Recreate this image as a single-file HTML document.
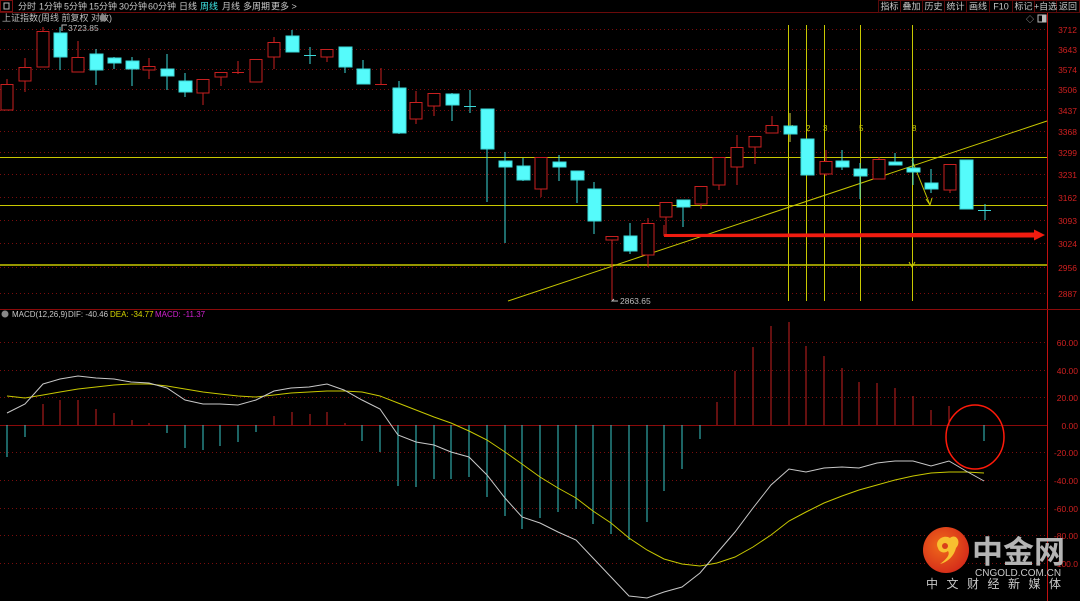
<!DOCTYPE html>
<html><head><meta charset="utf-8"><style>
html,body{margin:0;padding:0;background:#000;width:1080px;height:601px;overflow:hidden}
svg{display:block}
text{font-family:"Liberation Sans","Noto Sans CJK SC",sans-serif}
</style></head><body>
<svg width="1080" height="601" viewBox="0 0 1080 601" xmlns="http://www.w3.org/2000/svg">
<rect width="1080" height="601" fill="#000"/>
<!-- top bar -->
<line x1="0" y1="12.5" x2="1080" y2="12.5" stroke="#6a0a0a"/>
<rect x="0.5" y="0.5" width="12" height="11" fill="none" stroke="#7a1010"/>
<rect x="4" y="3" width="5" height="6" fill="none" stroke="#bbb" stroke-width="1"/>
<g font-size="9" fill="#c8c8c8">
<text x="18" y="9.5">分时</text><text x="39" y="9.5">1分钟</text><text x="64" y="9.5">5分钟</text>
<text x="89" y="9.5">15分钟</text><text x="119" y="9.5">30分钟</text><text x="148" y="9.5">60分钟</text>
<text x="179" y="9.5">日线</text><text x="200" y="9.5" fill="#3fe8e8">周线</text><text x="222" y="9.5">月线</text>
<text x="243" y="9.5">多周期</text><text x="271" y="9.5">更多 &gt;</text>
</g>
<g stroke="#5a0a0a" fill="none">
<rect x="878.5" y="0.5" width="22" height="12"/><rect x="900.5" y="0.5" width="22" height="12"/>
<rect x="922.5" y="0.5" width="22" height="12"/><rect x="944.5" y="0.5" width="22" height="12"/>
<rect x="966.5" y="0.5" width="23" height="12"/><rect x="989.5" y="0.5" width="23" height="12"/>
<rect x="1012.5" y="0.5" width="22" height="12"/><rect x="1034.5" y="0.5" width="22" height="12"/>
<rect x="1056.5" y="0.5" width="23" height="12"/>
</g>
<g font-size="9" fill="#c8c8c8" text-anchor="middle">
<text x="889.5" y="9.5">指标</text><text x="911.5" y="9.5">叠加</text><text x="933.5" y="9.5">历史</text>
<text x="955.5" y="9.5">统计</text><text x="978" y="9.5">画线</text><text x="1001" y="9.5">F10</text>
<text x="1023.5" y="9.5">标记</text><text x="1045.5" y="9.5">+自选</text><text x="1068" y="9.5">返回</text>
</g>
<text x="2" y="21" font-size="9" fill="#bdbdbd">上证指数(周线 前复权 对数)</text>
<circle cx="103" cy="18" r="3.5" fill="#888"/>
<text x="1026" y="22" font-size="8" fill="#bbb">◇</text>
<rect x="1038" y="15" width="8" height="7" fill="none" stroke="#bbb"/><rect x="1042" y="15" width="4" height="7" fill="#bbb"/>

<!-- axis -->
<line x1="1047.5" y1="13" x2="1047.5" y2="601" stroke="#c01010"/>
<line x1="0" y1="309.5" x2="1080" y2="309.5" stroke="#8a0a0a"/>
<g stroke="#7a0d0d" stroke-dasharray="1,3">
<line x1="0" y1="29.5" x2="1047" y2="29.5"/><line x1="0" y1="49.5" x2="1047" y2="49.5"/>
<line x1="0" y1="69.5" x2="1047" y2="69.5"/><line x1="0" y1="89.5" x2="1047" y2="89.5"/>
<line x1="0" y1="110.5" x2="1047" y2="110.5"/><line x1="0" y1="131.5" x2="1047" y2="131.5"/>
<line x1="0" y1="152.5" x2="1047" y2="152.5"/><line x1="0" y1="174.5" x2="1047" y2="174.5"/>
<line x1="0" y1="197.5" x2="1047" y2="197.5"/><line x1="0" y1="220.5" x2="1047" y2="220.5"/>
<line x1="0" y1="243.5" x2="1047" y2="243.5"/><line x1="0" y1="267.5" x2="1047" y2="267.5"/>
<line x1="0" y1="293.5" x2="1047" y2="293.5"/>
<line x1="0" y1="342.5" x2="1047" y2="342.5"/><line x1="0" y1="370.5" x2="1047" y2="370.5"/>
<line x1="0" y1="397.5" x2="1047" y2="397.5"/><line x1="0" y1="452.5" x2="1047" y2="452.5"/>
<line x1="0" y1="480.5" x2="1047" y2="480.5"/><line x1="0" y1="508.5" x2="1047" y2="508.5"/>
<line x1="0" y1="535.5" x2="1047" y2="535.5"/><line x1="0" y1="563.5" x2="1047" y2="563.5"/>
</g>
<line x1="0" y1="425.5" x2="1047" y2="425.5" stroke="#8a0a0a"/>
<g font-size="8.5" fill="#d02020" text-anchor="end">
<text x="1077" y="33">3712</text><text x="1077" y="53">3643</text><text x="1077" y="73">3574</text>
<text x="1077" y="93">3506</text><text x="1077" y="114">3437</text><text x="1077" y="135">3368</text>
<text x="1077" y="156">3299</text><text x="1077" y="178">3231</text><text x="1077" y="201">3162</text>
<text x="1077" y="224">3093</text><text x="1077" y="247">3024</text><text x="1077" y="271">2956</text>
<text x="1077" y="297">2887</text>
<text x="1078" y="346">60.00</text><text x="1078" y="374">40.00</text><text x="1078" y="401">20.00</text>
<text x="1078" y="429">0.00</text><text x="1078" y="456">-20.00</text><text x="1078" y="484">-40.00</text>
<text x="1078" y="512">-60.00</text><text x="1078" y="539">-80.00</text><text x="1078" y="567">-100.0</text>
</g>

<!-- yellow lines -->
<g stroke="#c8c800" stroke-width="1">
<line x1="0" y1="157.5" x2="1047" y2="157.5"/><line x1="0" y1="205.5" x2="1047" y2="205.5"/>
<line x1="0" y1="265" x2="1047" y2="265" stroke-width="1.5"/>
<line x1="788.5" y1="25" x2="788.5" y2="301"/><line x1="806.5" y1="25" x2="806.5" y2="301"/>
<line x1="824.5" y1="25" x2="824.5" y2="301"/><line x1="860.5" y1="25" x2="860.5" y2="301"/>
<line x1="912.5" y1="25" x2="912.5" y2="301"/>
<line x1="508" y1="301" x2="1047" y2="121"/>
<polyline points="912,160 930,205" fill="none"/>
<polyline points="926,199 930,205 932,198" fill="none"/>
<polyline points="909,262 912,267 915,262" fill="none"/>
</g>
<g font-size="8" fill="#c8c800"><text x="790" y="131">1</text><text x="806" y="131">2</text><text x="823" y="131">3</text><text x="859" y="131">5</text><text x="912" y="131">8</text></g>

<!-- candles -->
<g stroke-width="1">
<g stroke="#c82020" fill="#000">
<line x1="7" y1="79" x2="7" y2="110"/><rect x="1" y="84.5" width="12" height="25.5"/>
<line x1="25" y1="58" x2="25" y2="92"/><rect x="19" y="67.5" width="12" height="13.5"/>
<line x1="43" y1="27" x2="43" y2="67"/><rect x="37" y="31.5" width="12" height="35.5"/>
<line x1="78" y1="41" x2="78" y2="72"/><rect x="72" y="57.5" width="12" height="14.5"/>
<line x1="149" y1="58" x2="149" y2="79"/><rect x="143" y="66.5" width="12" height="3.5"/>
<line x1="203" y1="79" x2="203" y2="105"/><rect x="197" y="79.5" width="12" height="13.5"/>
<line x1="221" y1="72" x2="221" y2="86"/><rect x="215" y="72.5" width="12" height="4.5"/>
<line x1="238" y1="61" x2="238" y2="74"/><line x1="232" y1="72.5" x2="244" y2="72.5"/>
<rect x="250" y="59.5" width="12" height="22.5"/>
<line x1="274" y1="37" x2="274" y2="69"/><rect x="268" y="42.5" width="12" height="14.5"/>
<line x1="327" y1="49" x2="327" y2="62"/><rect x="321" y="49.5" width="12" height="7.5"/>
<line x1="381" y1="68" x2="381" y2="85"/><line x1="375" y1="84.5" x2="387" y2="84.5"/>
<line x1="416" y1="91" x2="416" y2="124"/><rect x="410" y="102.5" width="12" height="16.5"/>
<line x1="434" y1="93" x2="434" y2="116"/><rect x="428" y="93.5" width="12" height="12.5"/>
<line x1="541" y1="157" x2="541" y2="197"/><rect x="535" y="157.5" width="12" height="31.5"/>
<line x1="612" y1="236" x2="612" y2="300"/><rect x="606" y="236.5" width="12" height="3.5"/>
<line x1="648" y1="218" x2="648" y2="267"/><rect x="642" y="223.5" width="12" height="31.5"/>
<line x1="666" y1="202" x2="666" y2="237"/><rect x="660" y="202.5" width="12" height="14.5"/>
<line x1="701" y1="186" x2="701" y2="209"/><rect x="695" y="186.5" width="12" height="17.5"/>
<line x1="719" y1="157" x2="719" y2="190"/><rect x="713" y="157.5" width="12" height="27.5"/>
<line x1="737" y1="135" x2="737" y2="185"/><rect x="731" y="147.5" width="12" height="19.5"/>
<line x1="755" y1="136" x2="755" y2="164"/><rect x="749" y="136.5" width="12" height="10.5"/>
<line x1="772" y1="116" x2="772" y2="133"/><rect x="766" y="125.5" width="12" height="7.5"/>
<line x1="826" y1="150" x2="826" y2="176"/><rect x="820" y="161.5" width="12" height="12.5"/>
<line x1="879" y1="157" x2="879" y2="179"/><rect x="873" y="159.5" width="12" height="19.5"/>
<line x1="950" y1="164" x2="950" y2="193"/><rect x="944" y="164.5" width="12" height="25.5"/>
</g>
<g stroke="#3cd8d8" fill="#55fbfb">
<line x1="60" y1="27" x2="60" y2="70"/><rect x="54" y="33" width="13" height="24"/>
<line x1="96" y1="49" x2="96" y2="85"/><rect x="90" y="54" width="13" height="16"/>
<line x1="114" y1="57" x2="114" y2="69"/><rect x="108" y="58" width="13" height="5"/>
<line x1="132" y1="57" x2="132" y2="86"/><rect x="126" y="61" width="13" height="8"/>
<line x1="167" y1="54" x2="167" y2="90"/><rect x="161" y="69" width="13" height="7"/>
<line x1="185" y1="73" x2="185" y2="97"/><rect x="179" y="81" width="13" height="11"/>
<line x1="292" y1="30" x2="292" y2="52"/><rect x="286" y="36" width="13" height="16"/>
<line x1="310" y1="47" x2="310" y2="64"/><line x1="304" y1="55.5" x2="316" y2="55.5"/>
<line x1="345" y1="47" x2="345" y2="73"/><rect x="339" y="47" width="13" height="20"/>
<line x1="363" y1="60" x2="363" y2="84"/><rect x="357" y="69" width="13" height="15"/>
<line x1="399" y1="81" x2="399" y2="134"/><rect x="393" y="88" width="13" height="45"/>
<line x1="452" y1="93" x2="452" y2="121"/><rect x="446" y="94" width="13" height="11"/>
<line x1="470" y1="90" x2="470" y2="113"/><line x1="464" y1="106.5" x2="476" y2="106.5"/>
<line x1="487" y1="109" x2="487" y2="202"/><rect x="481" y="109" width="13" height="40"/>
<line x1="505" y1="152" x2="505" y2="243"/><rect x="499" y="161" width="13" height="6"/>
<line x1="523" y1="158" x2="523" y2="181"/><rect x="517" y="166" width="13" height="14"/>
<line x1="559" y1="155" x2="559" y2="181"/><rect x="553" y="162" width="13" height="5"/>
<line x1="577" y1="171" x2="577" y2="203"/><rect x="571" y="171" width="13" height="9"/>
<line x1="594" y1="182" x2="594" y2="234"/><rect x="588" y="189" width="13" height="32"/>
<line x1="630" y1="223" x2="630" y2="254"/><rect x="624" y="236" width="13" height="15"/>
<line x1="683" y1="200" x2="683" y2="227"/><rect x="677" y="200" width="13" height="7"/>
<line x1="790" y1="113" x2="790" y2="142" stroke="#cccc40"/><rect x="784" y="126" width="13" height="8"/>
<line x1="808" y1="139" x2="808" y2="175"/><rect x="801" y="139" width="13" height="36"/>
<line x1="842" y1="150" x2="842" y2="170"/><rect x="836" y="161" width="13" height="6"/>
<line x1="860" y1="163" x2="860" y2="199"/><rect x="854" y="169" width="13" height="7"/>
<line x1="895" y1="153" x2="895" y2="165"/><rect x="889" y="162" width="13" height="3"/>
<line x1="913" y1="158" x2="913" y2="185"/><rect x="907" y="168" width="13" height="4"/>
<line x1="931" y1="169" x2="931" y2="193"/><rect x="925" y="183" width="13" height="6"/>
<line x1="966" y1="160" x2="966" y2="209"/><rect x="960" y="160" width="13" height="49"/>
<line x1="985" y1="204" x2="985" y2="220"/><line x1="978" y1="210.5" x2="991" y2="210.5"/>
</g>
</g>
<!-- red arrow -->
<polygon points="664,234 1034,232.5 1034,229.5 1045,235 1034,240.5 1034,237.5 664,237" fill="#f01c10"/>
<line x1="664" y1="225" x2="664" y2="236" stroke="#c82020"/>
<g font-size="8.5" fill="#bbb"><text x="68" y="31">3723.85</text><text x="620" y="304">2863.65</text></g>
<polyline points="62,31 62,25 67,25" fill="none" stroke="#bbb"/>
<polyline points="618,301 612,301 614,299" fill="none" stroke="#bbb"/>

<!-- MACD -->
<circle cx="5" cy="314" r="3.5" fill="#888"/>
<g font-size="8"><text x="12" y="317" fill="#c8c8c8">MACD(12,26,9)</text><text x="68" y="317" fill="#c8c8c8">DIF: -40.46</text>
<text x="110" y="317" fill="#d8d800">DEA: -34.77</text><text x="155" y="317" fill="#d020d0">MACD: -11.37</text></g>
<g stroke="#c82020">
<line x1="43" y1="425" x2="43" y2="404"/><line x1="60" y1="425" x2="60" y2="400"/><line x1="78" y1="425" x2="78" y2="400"/>
<line x1="96" y1="425" x2="96" y2="409"/><line x1="114" y1="425" x2="114" y2="413"/><line x1="132" y1="425" x2="132" y2="420"/>
<line x1="149" y1="425" x2="149" y2="423"/><line x1="274" y1="425" x2="274" y2="416"/><line x1="292" y1="425" x2="292" y2="412"/>
<line x1="310" y1="425" x2="310" y2="414"/><line x1="327" y1="425" x2="327" y2="412"/><line x1="345" y1="425" x2="345" y2="423"/>
<line x1="717" y1="425" x2="717" y2="402"/><line x1="735" y1="425" x2="735" y2="371"/><line x1="753" y1="425" x2="753" y2="347"/>
<line x1="771" y1="425" x2="771" y2="326"/><line x1="789" y1="425" x2="789" y2="322"/><line x1="806" y1="425" x2="806" y2="346"/>
<line x1="824" y1="425" x2="824" y2="356"/><line x1="842" y1="425" x2="842" y2="368"/><line x1="859" y1="425" x2="859" y2="382"/>
<line x1="877" y1="425" x2="877" y2="383"/><line x1="895" y1="425" x2="895" y2="388"/><line x1="913" y1="425" x2="913" y2="396"/>
<line x1="931" y1="425" x2="931" y2="410"/><line x1="949" y1="425" x2="949" y2="406"/>
</g>
<g stroke="#38c8c8">
<line x1="7" y1="425" x2="7" y2="457"/><line x1="25" y1="425" x2="25" y2="437"/><line x1="167" y1="425" x2="167" y2="433"/>
<line x1="185" y1="425" x2="185" y2="448"/><line x1="203" y1="425" x2="203" y2="450"/><line x1="220" y1="425" x2="220" y2="446"/>
<line x1="238" y1="425" x2="238" y2="442"/><line x1="256" y1="425" x2="256" y2="432"/><line x1="362" y1="425" x2="362" y2="441"/>
<line x1="380" y1="425" x2="380" y2="452"/><line x1="398" y1="425" x2="398" y2="486"/><line x1="416" y1="425" x2="416" y2="487"/>
<line x1="434" y1="425" x2="434" y2="479"/><line x1="451" y1="425" x2="451" y2="479"/><line x1="469" y1="425" x2="469" y2="477"/>
<line x1="487" y1="425" x2="487" y2="497"/><line x1="505" y1="425" x2="505" y2="516"/><line x1="522" y1="425" x2="522" y2="529"/>
<line x1="540" y1="425" x2="540" y2="518"/><line x1="558" y1="425" x2="558" y2="512"/><line x1="576" y1="425" x2="576" y2="509"/>
<line x1="593" y1="425" x2="593" y2="524"/><line x1="611" y1="425" x2="611" y2="534"/><line x1="629" y1="425" x2="629" y2="540"/>
<line x1="647" y1="425" x2="647" y2="522"/><line x1="664" y1="425" x2="664" y2="491"/><line x1="682" y1="425" x2="682" y2="469"/>
<line x1="700" y1="425" x2="700" y2="439"/><line x1="984" y1="425" x2="984" y2="441"/>
</g>
<polyline fill="none" stroke="#c8c800" points="7,396 25,398 43,395 60,392 78,389 96,387 114,385 131,384 149,384 167,386 185,389 203,392 220,394 238,396 256,397 274,395 291,393 309,392 327,391 344,391 362,392 380,396 398,403 416,410 434,417 451,423 469,431 487,440 505,452 522,464 540,477 558,488 576,498 593,511 611,523 629,538 647,550 664,559 682,564 700,566 717,563 735,557 753,547 771,535 789,521 806,512 824,503 842,496 859,490 877,485 895,480 913,476 931,473 949,472 966,472 984,473"/>
<polyline fill="none" stroke="#c8c8c8" points="7,413 25,404 43,384 60,379 78,376 96,378 114,379 131,382 149,383 167,388 185,400 203,404 220,404 238,405 256,400 274,391 291,388 309,387 327,384 344,390 362,400 380,409 398,435 416,442 434,445 451,452 469,457 487,475 505,498 522,517 540,523 558,532 576,540 593,558 611,577 629,596 647,598 664,592 682,587 700,573 717,553 735,532 753,508 771,485 789,469 806,472 824,468 842,467 859,468 877,463 895,461 913,461 931,466 949,461 966,471 984,481"/>
<ellipse cx="975" cy="437" rx="29" ry="32" fill="none" stroke="#ff1a0a" stroke-width="1.5"/>

<!-- logo -->
<defs><radialGradient id="lg" cx="0.4" cy="0.4" r="0.7"><stop offset="0" stop-color="#f06a1a"/><stop offset="1" stop-color="#d2261a"/></radialGradient></defs>
<circle cx="946" cy="550" r="23" fill="url(#lg)"/>
<path d="M938,548 C934,540 944,534 950,538 C956,533 962,542 956,548 C954,556 948,562 940,564 C948,558 950,554 948,551 C944,554 939,552 938,548 Z" fill="#f8c030"/>
<circle cx="945" cy="546" r="3" fill="#d9401a"/>
<text x="972" y="563" font-size="31" font-weight="bold" fill="#b4b4b4" font-family="'Noto Sans CJK SC',sans-serif">中金网</text>
<text x="975" y="576" font-size="10" fill="#c8c8c8">CNGOLD.COM.CN</text>
<text x="926" y="588" font-size="12" fill="#c8c8c8" letter-spacing="8.5" font-family="'Noto Sans CJK SC',sans-serif">中文财经新媒体</text>
</svg>
</body></html>
